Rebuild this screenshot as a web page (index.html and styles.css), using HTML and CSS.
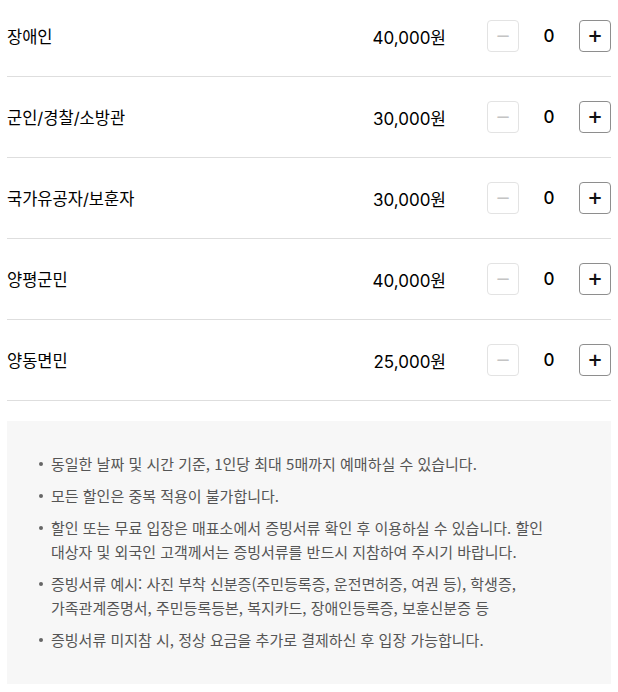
FILE: index.html
```html
<!DOCTYPE html>
<html lang="ko">
<head>
<meta charset="utf-8">
<link rel="stylesheet" href="styles.css">
</head>
<body>
<div class="page">
  <ul class="tickets">
    <li class="row"><span class="label">장애인</span><span class="price">40,000원</span><div class="stepper"><button class="btn minus" disabled>−</button><span class="count">0</span><button class="btn plus">+</button></div></li>
    <li class="row"><span class="label">군인/경찰/소방관</span><span class="price">30,000원</span><div class="stepper"><button class="btn minus" disabled>−</button><span class="count">0</span><button class="btn plus">+</button></div></li>
    <li class="row"><span class="label">국가유공자/보훈자</span><span class="price">30,000원</span><div class="stepper"><button class="btn minus" disabled>−</button><span class="count">0</span><button class="btn plus">+</button></div></li>
    <li class="row"><span class="label">양평군민</span><span class="price">40,000원</span><div class="stepper"><button class="btn minus" disabled>−</button><span class="count">0</span><button class="btn plus">+</button></div></li>
    <li class="row"><span class="label">양동면민</span><span class="price">25,000원</span><div class="stepper"><button class="btn minus" disabled>−</button><span class="count">0</span><button class="btn plus">+</button></div></li>
  </ul>
  <div class="notice">
    <ul class="notes">
      <li>동일한 날짜 및 시간 기준, 1인당 최대 5매까지 예매하실 수 있습니다.</li>
      <li>모든 할인은 중복 적용이 불가합니다.</li>
      <li>할인 또는 무료 입장은 매표소에서 증빙서류 확인 후 이용하실 수 있습니다. 할인 대상자 및 외국인 고객께서는 증빙서류를 반드시 지참하여 주시기 바랍니다.</li>
      <li>증빙서류 예시: 사진 부착 신분증(주민등록증, 운전면허증, 여권 등), 학생증, 가족관계증명서, 주민등록등본, 복지카드, 장애인등록증, 보훈신분증 등</li>
      <li>증빙서류 미지참 시, 정상 요금을 추가로 결제하신 후 입장 가능합니다.</li>
    </ul>
  </div>
</div>
</body>
</html>
```

FILE: styles.css
```css
* { box-sizing: border-box; }
html, body { margin: 0; padding: 0; background: #fff; }
body {
  font-family: Inter, "Noto Sans CJK KR", sans-serif;
  color: #111;
}
.page {
  margin: -4px 7px 0 7px;
}
.tickets {
  list-style: none;
  margin: 0;
  padding: 0;
}
.row {
  display: flex;
  align-items: center;
  height: 81px;
  border-bottom: 1px solid #dedede;
}
.label {
  flex: 1;
  font-size: 16.5px;
  font-weight: 400;
  color: #000;
}
.price {
  font-size: 17px;
  font-weight: 400;
  color: #000;
  margin-right: 41px;
}
.stepper {
  display: flex;
  align-items: center;
}
.btn {
  width: 32px;
  height: 32px;
  padding: 0;
  border-radius: 4px;
  background: #fff;
  display: flex;
  align-items: center;
  justify-content: center;
  font-family: "DejaVu Sans", sans-serif;
  font-size: 18px;
  line-height: 1;
}
.minus {
  border: 1px solid #e3e3e3;
  color: #c4c4c4;
}
.plus {
  border: 1px solid #8e8e8e;
  color: #111;
  font-weight: bold;
}
.count {
  width: 60px;
  text-align: center;
  font-size: 17px;
  font-weight: 500;
  color: #000;
}
.notice {
  margin-top: 20px;
  background: #f7f7f7;
  padding: 31px 32px 32px 33px;
}
.notes {
  list-style: none;
  margin: 0;
  padding: 0;
  display: flex;
  flex-direction: column;
  gap: 8px;
}
.notes li {
  position: relative;
  padding-left: 11px;
  font-family: "Noto Sans CJK KR", sans-serif;
  font-size: 15px;
  line-height: 24px;
  color: #555;
  word-break: keep-all;
}
.notes li::before {
  content: "";
  position: absolute;
  left: -1px;
  top: 10px;
  width: 4px;
  height: 4px;
  border-radius: 50%;
  background: #666;
}
```
